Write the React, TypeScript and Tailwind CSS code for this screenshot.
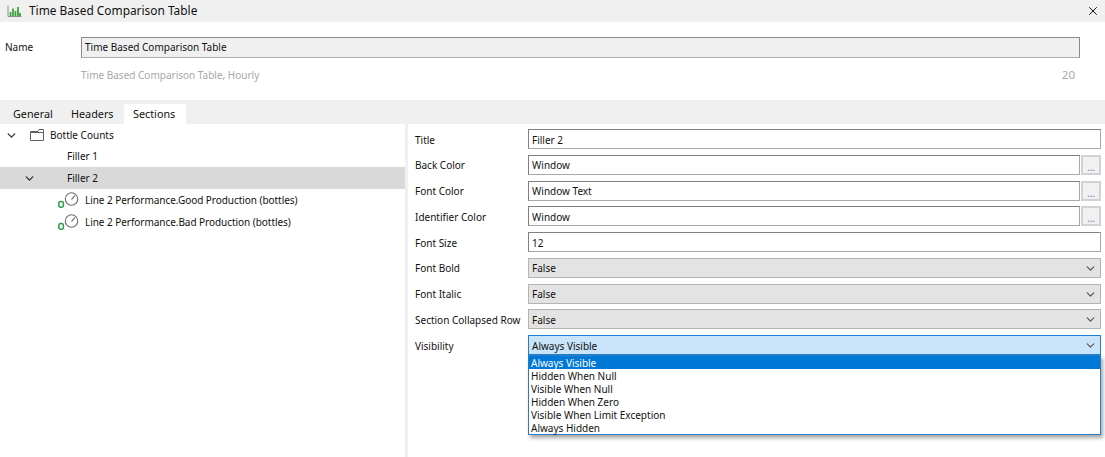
import { ChevronDown, X } from 'lucide-react';

const font = "[font-family:'Noto_Sans',sans-serif]";

const ChartIcon = () => (
  <svg width="15" height="13" viewBox="0 0 15 13" className="shrink-0">
    <path d="M1 0.5V11.5H14.5" fill="none" stroke="#8f8f8f" />
    <path d="M3.5 7V11M6 3.5V11M8.5 6V11M11 2V11M13 8V11" fill="none" stroke="#2f9e34" strokeWidth="1.7" />
  </svg>
);

const FolderIcon = () => (
  <svg width="14" height="12" viewBox="0 0 14 12" className="shrink-0">
    <path d="M0.5 3.5H13.5V11.5H0.5ZM0.5 3.5V2.5H8L9 0.5H13.5V3.5" fill="none" stroke="#5f5f5f" />
  </svg>
);

const GaugeIcon = () => (
  <svg width="22" height="16" viewBox="0 0 22 16" className="shrink-0">
    <circle cx="14.5" cy="7" r="6.2" fill="none" stroke="#6f6f6f" strokeWidth="1.1" />
    <path d="M14.5 7.5L17.8 3.6" stroke="#5a5a5a" strokeWidth="1.1" />
    <rect x="1.8" y="9.6" width="4.6" height="5.6" rx="2" fill="none" stroke="#2f9c4d" strokeWidth="1.5" />
  </svg>
);

const TextRow = ({ label, value, browse }: { label: string; value: string; browse?: boolean }) => (
  <div className="flex items-center h-5">
    <div className="w-[113px] shrink-0 pt-px">{label}</div>
    <div className="flex flex-1 h-5">
      <div className="flex-1 flex items-center pl-[3px] pt-px border border-[#808080] border-b-[#a8a8a8] border-r-[#a8a8a8] bg-white">
        {value}
      </div>
      {browse && (
        <div className="w-5 ml-px flex items-end justify-center pb-[1px] border-2 border-[#d2d2d2] bg-[#f1f1f1] text-[#5b84ad] text-[10px] leading-[10px]">
          ...
        </div>
      )}
    </div>
  </div>
);

const SelectRow = ({ label, value }: { label: string; value: string }) => (
  <div className="flex items-center h-5">
    <div className="w-[113px] shrink-0 pt-px">{label}</div>
    <div className="flex-1 h-5 flex items-center justify-between pl-[3px] pr-[3px] pt-px border border-[#b4b4b4] bg-[#e3e3e3]">
      {value}
      <ChevronDown size={13} strokeWidth={2.2} className="text-[#555]" />
    </div>
  </div>
);

const options = ['Always Visible', 'Hidden When Null', 'Visible When Null', 'Hidden When Zero', 'Visible When Limit Exception', 'Always Hidden'];

export default function App() {
  return (
    <div className={`w-[1105px] h-[457px] overflow-hidden bg-white flex flex-col text-[10px] leading-none text-[#111] ${font}`}>
      {/* Title bar */}
      <div className="h-[22px] shrink-0 bg-[#f0f0f0] flex items-center pl-[7px] pr-[5px]">
        <ChartIcon />
        <div className="ml-[7px] flex-1 text-[11.9px]">Time Based Comparison Table</div>
        <X size={14} strokeWidth={1.7} />
      </div>

      {/* Name */}
      <div className="h-[78px] shrink-0 pl-[5px] pr-[25px] pt-[15px]">
        <div className="flex items-center h-[21px]">
          <div className="w-[76px] pb-px">Name</div>
          <div className="flex-1 h-[21px] flex items-center pl-[3px] pb-px border border-[#8a8a8a] border-b-[#ababab] bg-[#f0f0f0]">
            Time Based Comparison Table
          </div>
        </div>
        <div className="flex justify-between items-center mt-[11px] pl-[76px] pr-[5px] text-[#a8a8a8]">
          <span>Time Based Comparison Table, Hourly</span>
          <span className="text-[11.5px]">20</span>
        </div>
      </div>

      {/* Tabs */}
      <div className="h-6 shrink-0 bg-[#f0f0f0] flex items-end pl-[3px] text-[10.8px]">
        <div className="h-5 w-[60px] pl-[10px] flex items-center">General</div>
        <div className="h-5 w-[61px] pl-[8px] flex items-center">Headers</div>
        <div className="h-5 w-[62px] pl-[9px] flex items-center bg-white">Sections</div>
      </div>

      <div className="flex flex-1 min-h-0">
        {/* Tree */}
        <div className="w-[405px] shrink-0 flex flex-col">
          <div className="h-[22px] flex items-center pl-[5px]">
            <ChevronDown size={13} strokeWidth={2.6} className="text-[#333]" />
            <div className="ml-[12px]"><FolderIcon /></div>
            <span className="ml-[6px]">Bottle Counts</span>
          </div>
          <div className="h-[21px] flex items-center pl-[67px] pb-px">Filler 1</div>
          <div className="h-[22px] flex items-center pl-[23px] bg-[#d9d9d9]">
            <ChevronDown size={13} strokeWidth={2.6} className="text-[#333]" />
            <span className="ml-[31px]">Filler 2</span>
          </div>
          <div className="h-[22px] flex items-center pl-[57px]">
            <GaugeIcon />
            <span className="ml-[6px] tracking-[-0.045px]">Line 2 Performance.Good Production (bottles)</span>
          </div>
          <div className="h-[22px] flex items-center pl-[57px]">
            <GaugeIcon />
            <span className="ml-[6px] tracking-[-0.045px]">Line 2 Performance.Bad Production (bottles)</span>
          </div>
        </div>

        <div className="w-[3px] shrink-0 bg-[#f0f0f0]" />

        {/* Properties */}
        <div className="flex-1 flex flex-col gap-[5.75px] pl-[7px] pr-[4px] pt-[5px]">
          <TextRow label="Title" value="Filler 2" />
          <TextRow label="Back Color" value="Window" browse />
          <TextRow label="Font Color" value="Window Text" browse />
          <TextRow label="Identifier Color" value="Window" browse />
          <TextRow label="Font Size" value="12" />
          <SelectRow label="Font Bold" value="False" />
          <SelectRow label="Font Italic" value="False" />
          <SelectRow label="Section Collapsed Row" value="False" />
          <div className="flex items-center h-5">
            <div className="w-[113px] shrink-0 pt-px">Visibility</div>
            <div className="relative flex-1 h-5">
              <div className="h-5 flex items-center justify-between pl-[3px] pr-[3px] pt-px border border-[#1f7fd0] bg-[#c9e4f8]">
                Always Visible
                <ChevronDown size={13} strokeWidth={2.2} className="text-[#555]" />
              </div>
              <div className="absolute left-0 right-0 top-5 z-10 border border-[#2b7cc7] bg-white shadow-[2px_3px_4px_rgba(0,0,0,0.35)]">
                {options.map((o, i) => (
                  <div key={o} className={`h-[13px] pl-[2px] pt-px flex items-center ${i === 0 ? 'bg-[#0078d7] text-white' : ''}`}>
                    {o}
                  </div>
                ))}
              </div>
            </div>
          </div>
        </div>
      </div>
    </div>
  );
}
